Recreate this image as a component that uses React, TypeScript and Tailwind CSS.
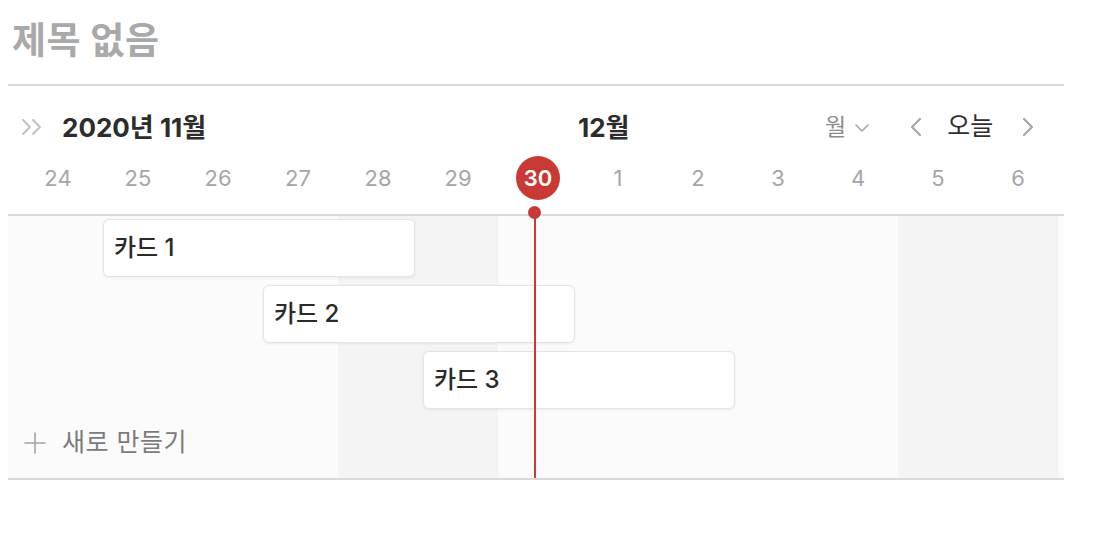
import React from 'react';

const days = [24, 25, 26, 27, 28, 29, 30, 1, 2, 3, 4, 5, 6];
const weekend = [4, 5, 11, 12];
const TODAY = 6;

const cards = [
  { title: '카드 1', cls: 'col-start-2 row-start-1' },
  { title: '카드 2', cls: 'col-start-4 row-start-2' },
  { title: '카드 3', cls: 'col-start-6 row-start-3' },
];

const ChevronsRight = () => (
  <svg width="24" height="18" viewBox="0 0 24 18" fill="none" stroke="#c2c2c2" strokeWidth="2" strokeLinecap="round" strokeLinejoin="round">
    <path d="M3 2 L10 9 L3 16" />
    <path d="M13 2 L20 9 L13 16" />
  </svg>
);

const ChevronDown = () => (
  <svg width="18" height="10" viewBox="0 0 18 10" fill="none" stroke="#a8a8a8" strokeWidth="1.6" strokeLinecap="round" strokeLinejoin="round">
    <path d="M3 2 L9 8 L15 2" />
  </svg>
);

const Arrow = ({ dir }: { dir: 'left' | 'right' }) => (
  <svg width="13" height="20" viewBox="0 0 13 20" fill="none" stroke="#a6a6a6" strokeWidth="2.2" strokeLinecap="round" strokeLinejoin="round">
    <path d={dir === 'left' ? 'M11 2 L3 10 L11 18' : 'M2 2 L10 10 L2 18'} />
  </svg>
);

const Plus = () => (
  <svg width="22" height="22" viewBox="0 0 22 22" fill="none" stroke="#a3a3a3" strokeWidth="1.6" strokeLinecap="round">
    <path d="M11 1 V21" />
    <path d="M1 11 H21" />
  </svg>
);

export default function App() {
  return (
    <div className="min-h-screen bg-white font-['Inter','Noto_Sans_CJK_KR',sans-serif]">
      <div className="ml-[8px] w-[1056px]">
        {/* page title */}
        <h1 className="pt-[20px] pl-[4px] text-[37px] leading-[42px] font-bold text-[#a9a9a9] tracking-[0.5px]">제목 없음</h1>
        <div className="mt-[22px] h-[2px] bg-[#dadada]" />

        {/* timeline header */}
        <div className="mt-[17px] h-[48px] grid grid-cols-[repeat(13,80px)] pl-[10px] pr-[6px] items-center">
          <div className="col-start-1 col-span-6 flex items-center">
            <div className="ml-[2px]">
              <ChevronsRight />
            </div>
            <span className="ml-[18px] text-[26px] font-bold text-[#2c2c2c]">2020년 11월</span>
          </div>
          <div className="col-start-8 col-span-3 text-[26px] font-bold text-[#2c2c2c]">12월</div>
          <div className="col-start-11 col-span-3 flex items-center pl-[7px]">
            <span className="text-[23px] text-[#8c8c8c]">월</span>
            <span className="ml-[7px] mt-[2px]">
              <ChevronDown />
            </span>
            <span className="ml-[38px]">
              <Arrow dir="left" />
            </span>
            <span className="ml-[25px] text-[25px] text-[#2f2f2f]">오늘</span>
            <span className="ml-[29px]">
              <Arrow dir="right" />
            </span>
          </div>
        </div>

        {/* day numbers */}
        <div className="mt-[5px] h-[44px] grid grid-cols-[repeat(13,80px)] pl-[10px] pr-[6px]">
          {days.map((d, i) => (
            <div key={i} className="flex items-center justify-center">
              {i === TODAY ? (
                <div className="w-[44px] h-[44px] rounded-full bg-[#c93a36] flex items-center justify-center text-[22px] font-semibold text-white">
                  {d}
                </div>
              ) : (
                <span className="text-[22px] text-[#a6a6a6]">{d}</span>
              )}
            </div>
          ))}
        </div>

        {/* timeline body */}
        <div className="mt-[14px] border-t-2 border-b-2 border-[#dadada] bg-[#fbfbfb] pl-[10px] pr-[6px]">
          <div className="grid grid-cols-[repeat(13,80px)] grid-rows-[66px_66px_66px_64px]">
            {days.map((d, i) => (
              <div
                key={'bg' + i}
                className={`row-[1/-1] ${weekend.includes(i) ? 'bg-[#f4f4f4]' : ''}`}
                style={{ gridColumnStart: i + 1 }}
              />
            ))}

            {/* now indicator */}
            <div className="col-start-7 row-[1/-1] relative">
              <div className="ml-[36px] w-[2px] h-full bg-[#c93a36]" />
              <div className="absolute left-[30px] top-[-10px] w-[13px] h-[13px] rounded-full bg-[#c93a36]" />
            </div>

            {cards.map(c => (
              <div
                key={c.title}
                className={`${c.cls} col-span-4 self-start mt-[3px] ml-[5px] w-[312px] h-[58px] bg-white rounded-[6px] border border-[#e4e4e4] shadow-[0_1px_3px_rgba(0,0,0,0.07)] flex items-center pl-[10px] text-[24px] font-medium text-[#2a2a2a]`}
              >
                {c.title}
              </div>
            ))}

            <div className="col-start-1 col-span-4 row-start-4 flex items-center pl-[6px] pb-[6px]">
              <Plus />
              <span className="ml-[16px] text-[25px] tracking-[0.5px] text-[#7b7b7b]">새로 만들기</span>
            </div>
          </div>
        </div>
      </div>
    </div>
  );
}
